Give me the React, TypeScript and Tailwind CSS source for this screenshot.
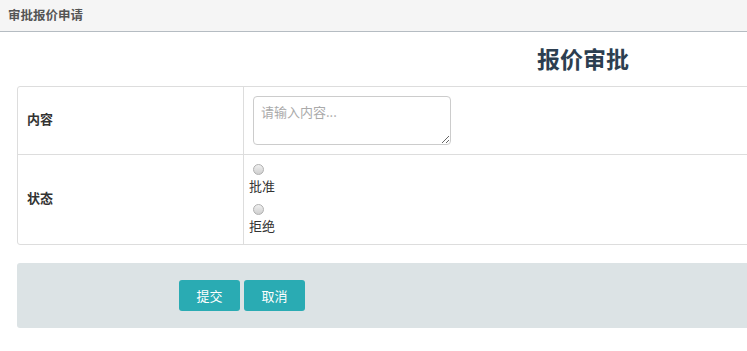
export default function App() {
  const font = { fontFamily: '"Noto Sans CJK SC", "Noto Sans", sans-serif' };

  return (
    <div className="w-full min-h-screen overflow-hidden bg-white" style={font}>
      <div className="h-[32px] bg-[#f5f5f5] border-b border-[#b5bcc2] flex items-center px-[8px]">
        <span className="text-[12.5px] font-bold text-[#555]">审批报价申请</span>
      </div>

      <div className="w-[1132px] ml-[17px]">
        <h1 className="h-[54px] flex items-center justify-center pb-[2px] text-[23px] font-bold text-[#2c3e50]">
          报价审批
        </h1>

        <div className="border border-[#dddddd] rounded-[3px]">
          <div className="flex h-[68px] border-b border-[#dddddd]">
            <div className="w-[226px] border-r border-[#dddddd] flex items-center pl-[9px] pb-[3px] text-[13px] font-bold text-[#333]">
              内容
            </div>
            <div className="flex-1 pl-[9px] pt-[9px]">
              <textarea
                placeholder="请输入内容..."
                className="w-[198px] h-[49px] border border-[#cccccc] rounded-[4px] px-[7px] py-[5px] text-[13px] text-[#333] placeholder:text-[#aaaaaa] outline-none resize-y"
              />
            </div>
          </div>

          <div className="flex h-[89px]">
            <div className="w-[226px] border-r border-[#dddddd] flex items-center pl-[9px] pb-[3px] text-[13px] font-bold text-[#333]">
              状态
            </div>
            <div className="flex-1 pl-[5px] pt-[9px] flex flex-col text-[13px] text-[#333]">
              {["批准", "拒绝"].map((t) => (
                <label key={t} className="flex flex-col items-start h-[41px]">
                  <input
                    type="radio"
                    name="status"
                    className="appearance-none w-[11px] h-[11px] rounded-full border border-[#b0b0b0] bg-gradient-to-b from-[#f0f0f0] to-[#cfcfcf] ml-[4px]"
                  />
                  <span className="leading-[18px] mt-[2px]">{t}</span>
                </label>
              ))}
            </div>
          </div>
        </div>

        <div className="mt-[18px] h-[65px] bg-[#dce3e5] rounded-[3px] flex items-center pl-[162px] gap-[4px]">
          <button className="w-[61px] h-[31px] bg-[#2aabb3] rounded-[3px] text-white text-[13px]">
            提交
          </button>
          <button className="w-[61px] h-[31px] bg-[#2aabb3] rounded-[3px] text-white text-[13px]">
            取消
          </button>
        </div>
      </div>
    </div>
  );
}
